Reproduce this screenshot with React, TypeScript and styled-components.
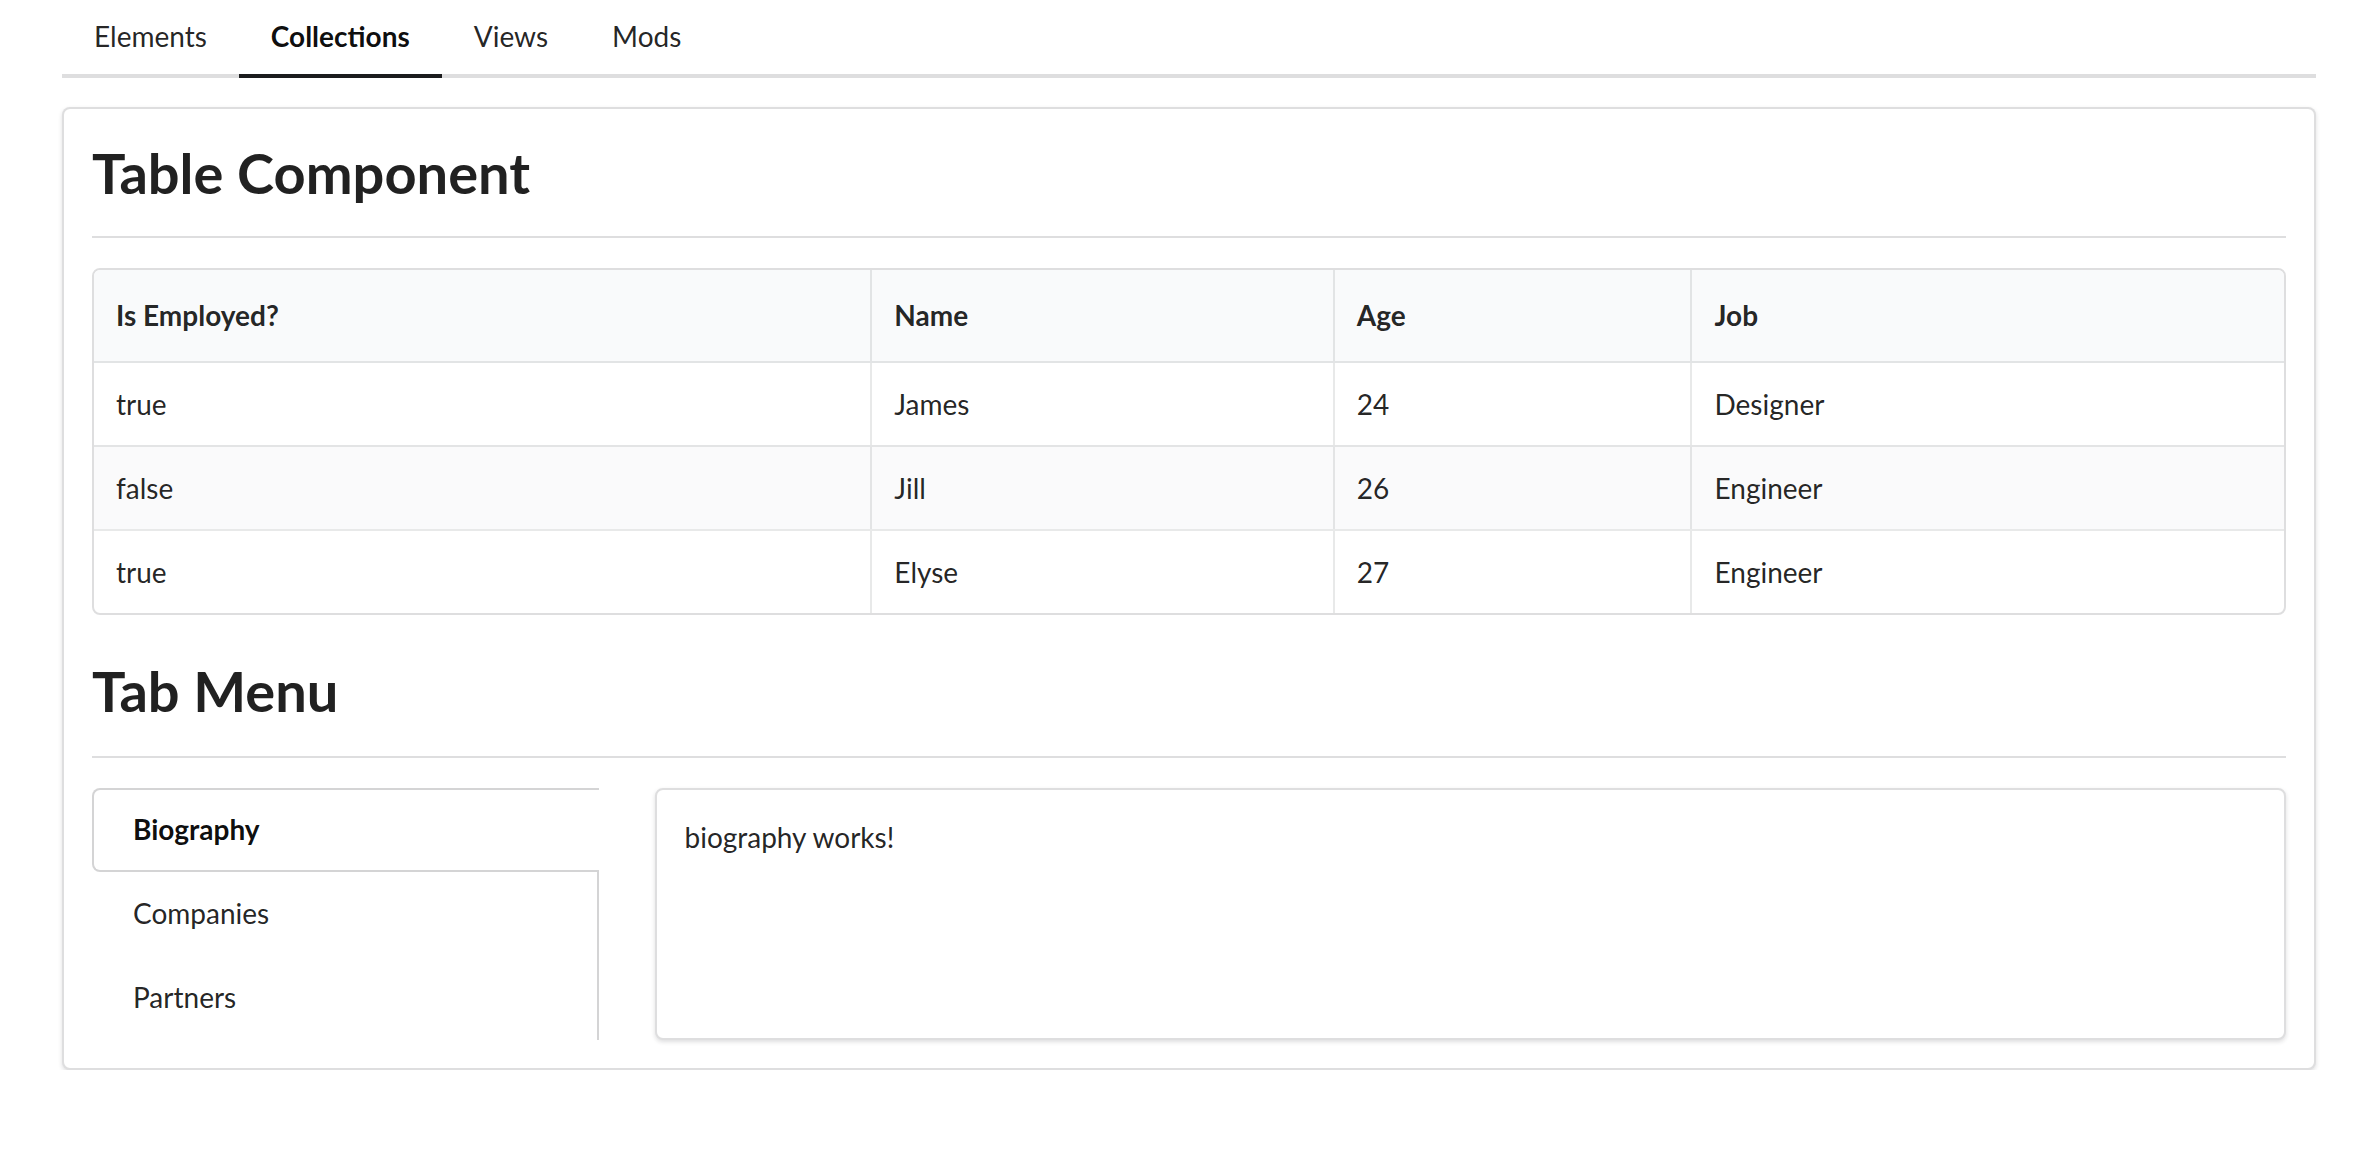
import React from "react";
import styled, { createGlobalStyle } from "styled-components";

const GlobalStyle = createGlobalStyle`
  html, body {
    margin: 0;
    padding: 0;
    background: #ffffff;
  }
  body {
    font-family: Lato, "Helvetica Neue", Arial, sans-serif;
    font-size: 28px;
    line-height: 40px;
    color: rgba(0, 0, 0, 0.87);
  }
  * { box-sizing: border-box; }
`;

const Page = styled.div`
  padding: 0 62px;
`;

const TopMenu = styled.nav`
  display: flex;
  border-bottom: 4px solid rgba(34, 36, 38, 0.15);
`;

const TopItem = styled.a<{ $active?: boolean }>`
  display: block;
  padding: 22px 32px 24px;
  margin-bottom: -4px;
  font-size: 28px;
  line-height: 28px;
  font-weight: ${(p) => (p.$active ? 700 : 400)};
  color: ${(p) => (p.$active ? "rgba(0,0,0,0.95)" : "rgba(0,0,0,0.87)")};
  border-bottom: 4px solid ${(p) => (p.$active ? "#1b1c1d" : "transparent")};
  cursor: pointer;
`;

const Card = styled.section`
  margin-top: 29px;
  padding: 28px;
  border: 2px solid rgba(34, 36, 38, 0.15);
  border-radius: 8px;
  box-shadow: 0 2px 4px 0 rgba(34, 36, 38, 0.15);
  background: #fff;
`;

const Heading = styled.h1<{ $first?: boolean }>`
  margin: ${(p) => (p.$first ? "0" : "40px")} 0 30px;
  padding-bottom: ${(p) => (p.$first ? "27px" : "29px")};
  font-size: 56px;
  line-height: 72px;
  font-weight: 700;
  color: rgba(0, 0, 0, 0.87);
  border-bottom: 2px solid rgba(34, 36, 38, 0.15);
`;

const Table = styled.table`
  width: 100%;
  border-collapse: separate;
  border-spacing: 0;
  border: 2px solid rgba(34, 36, 38, 0.15);
  border-radius: 8px;
  overflow: hidden;
  font-size: 28px;
  line-height: 40px;
  text-align: left;
`;

const Th = styled.th`
  background: #f9fafb;
  padding: 25px 22px 26px;
  font-weight: 700;
  color: rgba(0, 0, 0, 0.87);
  border-bottom: 2px solid rgba(34, 36, 38, 0.1);
  & + & {
    border-left: 2px solid rgba(34, 36, 38, 0.1);
  }
`;

const Tr = styled.tr<{ $striped?: boolean }>`
  background: ${(p) => (p.$striped ? "rgba(0, 0, 50, 0.02)" : "transparent")};
`;

const Td = styled.td`
  padding: 21px 22px;
  font-weight: 400;
  tr + tr > & {
    border-top: 2px solid rgba(34, 36, 38, 0.1);
  }
  & + & {
    border-left: 2px solid rgba(34, 36, 38, 0.1);
  }
`;

const TabGrid = styled.div`
  display: grid;
  grid-template-columns: calc((100% + 56px) * 0.25 - 56px) 1fr;
  column-gap: 56px;
  align-items: stretch;
`;

const SideMenu = styled.div`
  display: flex;
  flex-direction: column;
  border-right: 2px solid #d4d4d5;
`;

const SideItem = styled.a<{ $active?: boolean }>`
  display: block;
  padding: 23px 39px 25px;
  font-size: 28px;
  line-height: 32px;
  font-weight: ${(p) => (p.$active ? 700 : 400)};
  color: ${(p) => (p.$active ? "rgba(0,0,0,0.95)" : "rgba(0,0,0,0.87)")};
  background: #fff;
  border: 2px solid ${(p) => (p.$active ? "#d4d4d5" : "transparent")};
  border-right: 0;
  margin-right: ${(p) => (p.$active ? "-2px" : "0")};
  border-radius: ${(p) => (p.$active ? "8px 0 0 8px" : "0")};
  position: relative;
  cursor: pointer;
`;

const Pane = styled.div`
  padding: 27px 28px 28px;
  border: 2px solid rgba(34, 36, 38, 0.15);
  border-radius: 8px;
  box-shadow: 0 2px 4px 0 rgba(34, 36, 38, 0.15);
  font-size: 28px;
  line-height: 40px;
`;

const rows = [
  { employed: "true", name: "James", age: "24", job: "Designer" },
  { employed: "false", name: "Jill", age: "26", job: "Engineer" },
  { employed: "true", name: "Elyse", age: "27", job: "Engineer" },
];

const tabs = ["Biography", "Companies", "Partners"];

export default function App() {
  return (
    <>
      <GlobalStyle />
      <Page>
        <TopMenu>
          <TopItem>Elements</TopItem>
          <TopItem $active>Collections</TopItem>
          <TopItem>Views</TopItem>
          <TopItem>Mods</TopItem>
        </TopMenu>
        <Card>
          <Heading $first>Table Component</Heading>
          <Table>
            <colgroup>
              <col style={{ width: "35.45%" }} />
              <col style={{ width: "21.12%" }} />
              <col style={{ width: "16.33%" }} />
              <col style={{ width: "27.1%" }} />
            </colgroup>
            <thead>
              <tr>
                <Th>Is Employed?</Th>
                <Th>Name</Th>
                <Th>Age</Th>
                <Th>Job</Th>
              </tr>
            </thead>
            <tbody>
              {rows.map((r, i) => (
                <Tr key={i} $striped={i % 2 === 1}>
                  <Td>{r.employed}</Td>
                  <Td>{r.name}</Td>
                  <Td>{r.age}</Td>
                  <Td>{r.job}</Td>
                </Tr>
              ))}
            </tbody>
          </Table>
          <Heading>Tab Menu</Heading>
          <TabGrid>
            <SideMenu>
              {tabs.map((t, i) => (
                <SideItem key={t} $active={i === 0}>
                  {t}
                </SideItem>
              ))}
            </SideMenu>
            <Pane>biography works!</Pane>
          </TabGrid>
        </Card>
      </Page>
    </>
  );
}
